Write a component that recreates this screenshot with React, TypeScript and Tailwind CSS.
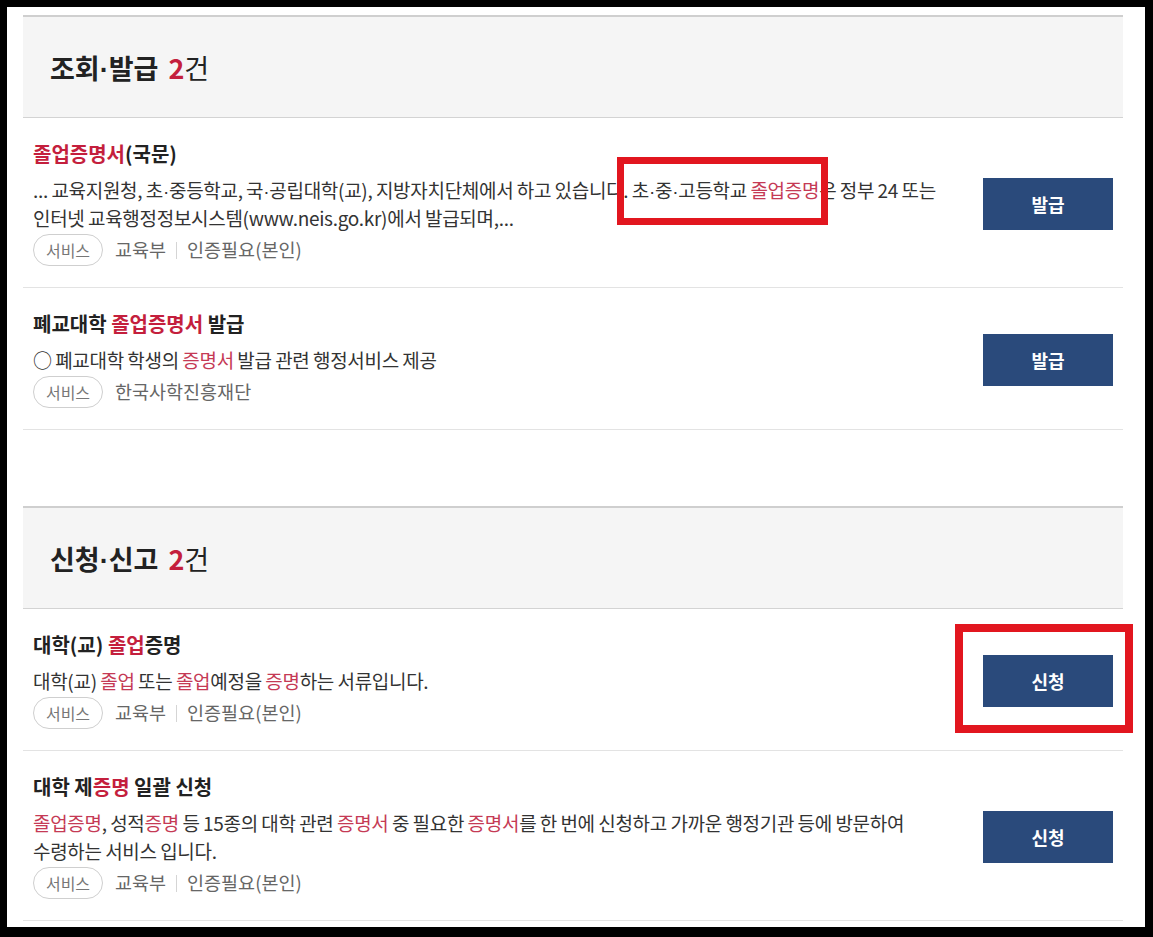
import React from "react";

type Part = string | { r: string };

type Item = {
  title: Part[];
  desc: Part[][];
  org: string;
  auth?: string;
  action: string;
};

const sections: { name: string; count: number; items: Item[] }[] = [
  {
    name: "조회·발급",
    count: 2,
    items: [
      {
        title: [{ r: "졸업증명서" }, "(국문)"],
        desc: [
          [
            "... 교육지원청, 초·중등학교, 국·공립대학(교), 지방자치단체에서 하고 있습니다. 초·중·고등학교 ",
            { r: "졸업증명" },
            "은 정부 24 또는",
          ],
          ["인터넷 교육행정정보시스템(www.neis.go.kr)에서 발급되며,..."],
        ],
        org: "교육부",
        auth: "인증필요(본인)",
        action: "발급",
      },
      {
        title: ["폐교대학 ", { r: "졸업증명서" }, " 발급"],
        desc: [["○ 폐교대학 학생의 ", { r: "증명서" }, " 발급 관련 행정서비스 제공"]],
        org: "한국사학진흥재단",
        action: "발급",
      },
    ],
  },
  {
    name: "신청·신고",
    count: 2,
    items: [
      {
        title: ["대학(교) ", { r: "졸업" }, "증명"],
        desc: [
          ["대학(교) ", { r: "졸업" }, " 또는 ", { r: "졸업" }, "예정을 ", { r: "증명" }, "하는 서류입니다."],
        ],
        org: "교육부",
        auth: "인증필요(본인)",
        action: "신청",
      },
      {
        title: ["대학 제", { r: "증명" }, " 일괄 신청"],
        desc: [
          [
            { r: "졸업증명" },
            ", 성적",
            { r: "증명" },
            " 등 15종의 대학 관련 ",
            { r: "증명서" },
            " 중 필요한 ",
            { r: "증명서" },
            "를 한 번에 신청하고 가까운 행정기관 등에 방문하여",
          ],
          ["수령하는 서비스 입니다."],
        ],
        org: "교육부",
        auth: "인증필요(본인)",
        action: "신청",
      },
    ],
  },
];

// the CJK font draws "·" full width; the reference has a narrow dot
const Dots = ({ s }: { s: string }) => (
  <>
    {s.split("·").map((chunk, i) => (
      <React.Fragment key={i}>
        {i > 0 && <span className="font-['Liberation_Sans'] leading-none">·</span>}
        {chunk}
      </React.Fragment>
    ))}
  </>
);

const Text = ({ parts, red }: { parts: Part[]; red: string }) => (
  <>
    {parts.map((p, i) =>
      typeof p === "string" ? (
        <Dots key={i} s={p} />
      ) : (
        <span key={i} className={red}>
          {p.r}
        </span>
      )
    )}
  </>
);

const ResultRow = ({ item }: { item: Item }) => (
  <div className="flex items-center border-b border-[#e3e3e3] pl-[10px] pr-[10px] pt-[24px] pb-[21px]">
    <div className="flex-1 pr-[30px]">
      <h3 className="h-[24px] text-[20px] leading-[24px] font-bold text-[#222]">
        <Text parts={item.title} red="text-[#c41f3d]" />
      </h3>
      <div className="mt-[10px] text-[19px] leading-[28px] text-[#333] tracking-[-0.3px] [word-spacing:-0.5px]">
        {item.desc.map((line, i) => (
          <p key={i} className="h-[28px] whitespace-nowrap">
            <Text parts={line} red="text-[#c53a55]" />
          </p>
        ))}
      </div>
      <div className="mt-[2px] flex items-center text-[18.5px] text-[#666]">
        <span className="flex h-[32px] w-[70px] items-center justify-center rounded-full border border-[#cfcfcf] text-[16px] text-[#777]">
          서비스
        </span>
        <span className="ml-[12px]">{item.org}</span>
        {item.auth && (
          <>
            <span className="mx-[10px] h-[17px] w-px bg-[#d5d5d5]" />
            <span>{item.auth}</span>
          </>
        )}
      </div>
    </div>
    <button className="h-[52px] w-[130px] shrink-0 bg-[#2a4a7b] text-[18px] font-bold text-white">
      {item.action}
    </button>
  </div>
);

export default function App() {
  return (
    <div
      className="relative h-[937px] w-[1153px] overflow-hidden bg-black pl-[7px] pr-[8px] pt-[7px] pb-[10px]"
      style={{ fontFamily: '"Noto Sans CJK KR", "Noto Sans", sans-serif' }}
    >
      <div className="h-full bg-white pl-[16px] pr-[22px] pt-[8px]">
        {sections.map((s, si) => (
          <section key={s.name} className={si > 0 ? "mt-[76px]" : ""}>
            <div className="flex h-[103px] items-center border-t-2 border-b border-t-[#cfcfcf] border-b-[#d3d3d3] bg-[#f5f5f5] pl-[27px] pt-[3px]">
              <h2 className="text-[27px] font-bold text-[#222]">
                <Dots s={s.name} />
                <span className="ml-[10px] text-[#c41f3d]">{s.count}</span>
                <span className="font-normal">건</span>
              </h2>
            </div>
            {s.items.map((it, i) => (
              <ResultRow key={i} item={it} />
            ))}
          </section>
        ))}
      </div>

      {/* annotation boxes */}
      <div className="absolute left-[617px] top-[157px] h-[68px] w-[211px] border-[7px] border-[#e2161f]" />
      <div className="absolute left-[955px] top-[624px] h-[109px] w-[178px] border-[8px] border-[#e2161f]" />
    </div>
  );
}
